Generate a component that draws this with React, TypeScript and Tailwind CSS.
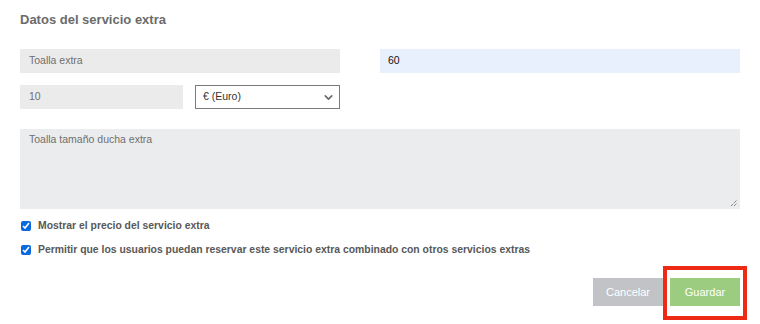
import { FiChevronDown } from 'react-icons/fi';

export default function App() {
  return (
    <div className="w-[760px] h-[324px] bg-white px-5 pt-[12px] font-['Liberation_Sans',Arial,sans-serif] relative">
      <h2 className="text-[13px] font-bold text-[#6b6b6b] leading-[16px]">Datos del servicio extra</h2>

      <div className="flex mt-[21px] gap-10">
        <div className="w-[320px] h-6 bg-[#ebebeb] flex items-center px-[9px] text-[10.5px] text-[#6f6f6f]">
          Toalla extra
        </div>
        <div className="flex-1 h-6 bg-[#e8f0fe] flex items-center px-[8px] text-[10.5px] text-[#111]">
          60
        </div>
      </div>

      <div className="flex mt-3 gap-3 w-[320px]">
        <div className="w-[163px] h-6 bg-[#ebebeb] flex items-center px-[9px] text-[10.5px] text-[#6f6f6f]">
          10
        </div>
        <div className="flex-1 h-6 border border-[#7a7a7a] bg-white flex items-center justify-between pl-[7px] pr-[4px] text-[10.5px] text-[#333]">
          <span>€ (Euro)</span>
          <FiChevronDown className="text-[#6a6a6a] w-[13px] h-[13px]" strokeWidth={3} />
        </div>
      </div>

      <div className="mt-5 h-20 bg-[#ebeced] relative px-[9px] pt-[3px] text-[10.5px] text-[#6f6f6f]">
        Toalla tamaño ducha extra
        <svg className="absolute right-[2px] bottom-[2px]" width="8" height="8" viewBox="0 0 8 8">
          <path d="M1 7 L7 1 M4 7 L7 4" stroke="#555" strokeWidth="1" strokeDasharray="1 1" />
        </svg>
      </div>

      <div className="mt-[11px] flex flex-col gap-[12px] text-[10.4px] font-bold text-[#585858]">
        <label className="flex items-center gap-[7px] h-3">
          <input type="checkbox" defaultChecked className="w-[10px] h-[10px] m-0 ml-[1px] accent-[#0a68e0]" />
          Mostrar el precio del servicio extra
        </label>
        <label className="flex items-center gap-[7px] h-3">
          <input type="checkbox" defaultChecked className="w-[10px] h-[10px] m-0 ml-[1px] accent-[#0a68e0]" />
          Permitir que los usuarios puedan reservar este servicio extra combinado con otros servicios extras
        </label>
      </div>

      <div className="flex justify-end gap-[7px] mt-[22px]">
        <button className="w-[70px] h-7 bg-[#c1c3c7] text-white text-[11px]">Cancelar</button>
        <div className="relative">
          <button className="w-[70px] h-7 bg-[#9ccc80] text-white text-[11px]">Guardar</button>
          <div className="absolute -left-[7px] -top-[12px] w-[84px] h-[54px] border-4 border-[#ee2a14] pointer-events-none" />
        </div>
      </div>
    </div>
  );
}
